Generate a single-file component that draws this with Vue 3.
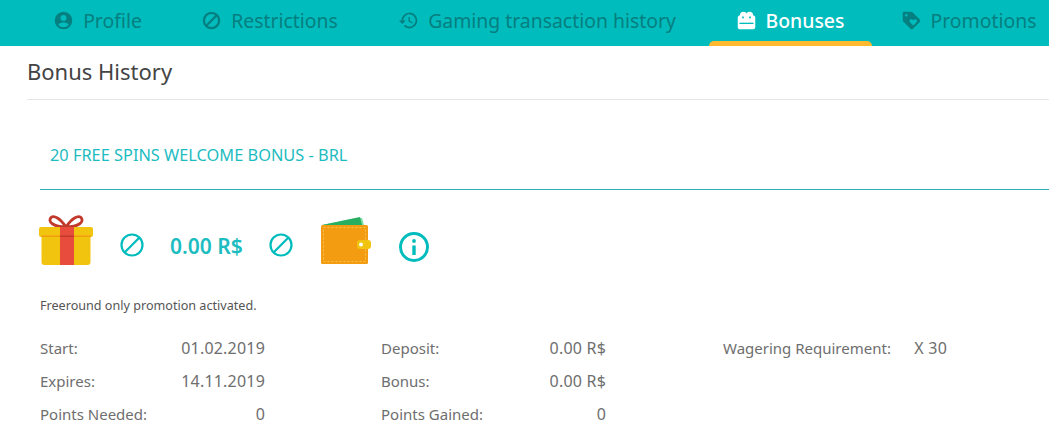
<script setup>
const tabs = [
  { label: 'Profile', icon: 'profile', width: 153 },
  { label: 'Restrictions', icon: 'ban', width: 191 },
  { label: 'Gaming transaction history', icon: 'history', width: 344 },
  { label: 'Bonuses', icon: 'bonus', width: 162, active: true },
  { label: 'Promotions', icon: 'tag', width: 195 }
]
const rows = [
  [['Start:', '01.02.2019'], ['Deposit:', '0.00 R$'], ['Wagering Requirement:', 'X 30']],
  [['Expires:', '14.11.2019'], ['Bonus:', '0.00 R$']],
  [['Points Needed:', '0'], ['Points Gained:', '0']]
]
</script>

<template>
  <div class="page">
    <nav class="tabs">
      <a v-for="t in tabs" :key="t.label" class="tab" :class="{ active: t.active }" :style="{ width: t.width + 'px' }">
        <svg v-if="t.icon === 'profile'" class="ico" viewBox="0 0 24 24"><path fill="currentColor" d="M12 2a10 10 0 1 0 0 20 10 10 0 0 0 0-20zm0 3.600a3.400 3.400 0 1 1 0 6.800 3.400 3.400 0 0 1 0-6.800zm0 14.200a7.600 7.600 0 0 1-6-3c.5-1.900 4-2.900 6-2.900s5.500 1 6 2.900a7.600 7.600 0 0 1-6 3z"/></svg>
        <svg v-else-if="t.icon === 'ban'" class="ico" viewBox="0 0 24 24"><circle cx="12" cy="12" r="8.700" fill="none" stroke="currentColor" stroke-width="2.600"/><path d="M5.500 18.500 18.500 5.500" stroke="currentColor" stroke-width="2.600"/></svg>
        <svg v-else-if="t.icon === 'history'" class="ico" viewBox="0 0 24 24"><path fill="currentColor" d="M13 3a9 9 0 0 0-9 9H1l3.900 3.900L9 12H6a7 7 0 1 1 2.050 4.950L6.640 18.360A9 9 0 1 0 13 3zm-1 5v5l4.280 2.540.72-1.210-3.500-2.080V8z"/></svg>
        <svg v-else-if="t.icon === 'bonus'" class="ico" viewBox="0 0 24 24">
          <circle cx="8.500" cy="6" r="4" fill="currentColor"/>
          <circle cx="15.500" cy="6" r="4" fill="currentColor"/>
          <rect x="2" y="6" width="20" height="16" rx="3" fill="currentColor"/>
          <rect x="7" y="7.500" width="2" height="2" fill="#00bcbd"/>
          <rect x="15" y="7.500" width="2" height="2" fill="#00bcbd"/>
          <rect x="4" y="14.500" width="16" height="1.500" fill="#00bcbd"/>
        </svg>
        <svg v-else class="ico" viewBox="0 0 24 24"><path fill="currentColor" fill-rule="evenodd" d="M2 3.500A1.500 1.500 0 0 1 3.500 2h8.200c.5 0 1 .2 1.400.6l8.300 8.300a2 2 0 0 1 0 2.800l-7.700 7.700a2 2 0 0 1-2.800 0l-8.300-8.300A2 2 0 0 1 2 11.700zM6 4.500a1.500 1.500 0 1 0 0 3 1.500 1.500 0 0 0 0-3zM11.500 10.500c-1.500 0-2.500 2-1.200 3.400l3.700 3.700 3.700-3.700c1.300-1.400.3-3.400-1.200-3.400-1 0-1.600.5-2.500 1.300-.9-.8-1.500-1.300-2.500-1.300z"/></svg>
        <span>{{ t.label }}</span>
      </a>
    </nav>

    <h1 class="heading">Bonus History</h1>

    <section class="bonus">
      <h2 class="title">20 FREE SPINS WELCOME BONUS - BRL</h2>

      <div class="summary">
        <svg class="gift" viewBox="0 0 54 50">
          <path d="M27 12C21 3 15 0 12 2.500c-3.500 4 2 9.500 15 9.500zm0 0C33 3 39 0 42 2.500c3.500 4-2 9.500-15 9.500z" fill="none" stroke="#c0392b" stroke-width="2.800"/>
          <path d="M2.500 20h49v27a3 3 0 0 1-3 3h-43a3 3 0 0 1-3-3z" fill="#f1c40f"/>
          <rect x="0" y="12" width="54" height="10" rx="2" fill="#f1c40f"/>
          <rect x="2.500" y="20.500" width="49" height="1.500" fill="#f39c12"/>
          <rect x="21" y="12" width="14" height="38" fill="#e74c3c"/>
          <rect x="21" y="20.500" width="14" height="1.500" fill="#c0392b"/>
        </svg>
        <svg class="ban first" viewBox="0 0 24 24"><circle cx="12" cy="12" r="10.500" fill="none" stroke="#00bcbd" stroke-width="2.200"/><path d="M4.800 19.200 19.200 4.800" stroke="#00bcbd" stroke-width="2.200"/></svg>
        <strong class="amount">0.00 R$</strong>
        <svg class="ban second" viewBox="0 0 24 24"><circle cx="12" cy="12" r="10.500" fill="none" stroke="#00bcbd" stroke-width="2.200"/><path d="M4.800 19.200 19.200 4.800" stroke="#00bcbd" stroke-width="2.200"/></svg>
        <svg class="wallet" viewBox="0 0 50 47">
          <path d="M1 8 36 1l5 0 2 7z" fill="#7fe0a3"/>
          <path d="M1 8 39 0l2 8z" fill="#27ae60"/>
          <rect x="0" y="8" width="47" height="39" rx="1.500" fill="#f39c12"/>
          <rect x="2.500" y="10.500" width="42" height="34" fill="none" stroke="#f8c24a" stroke-width="1" stroke-dasharray="2 2"/>
          <rect x="36" y="23" width="14" height="9" rx="3" fill="#f1c40f"/>
          <circle cx="40" cy="27.500" r="2" fill="#fff"/>
        </svg>
        <svg class="info" viewBox="0 0 30 30"><circle cx="15" cy="15" r="13.500" fill="none" stroke="#00bcbd" stroke-width="3"/><rect x="13.300" y="13.500" width="3.400" height="9.500" fill="#00bcbd"/><circle cx="15" cy="9" r="1.900" fill="#00bcbd"/></svg>
      </div>

      <p class="note">Freeround only promotion activated.</p>

      <div class="grid">
        <div v-for="(row, i) in rows" :key="i" class="row">
          <div v-for="(cell, j) in row" :key="j" class="cell" :class="'col' + j">
            <span class="key">{{ cell[0] }}</span>
            <span class="val">{{ cell[1] }}</span>
          </div>
        </div>
      </div>
    </section>
  </div>
</template>

<style>
html, body { margin: 0; background: #fff; overflow: hidden; }
</style>

<style scoped>
.page { width: 1049px; height: 440px; overflow: hidden; font-family: "Noto Sans", "Open Sans", sans-serif; color: #6e6e6e; background: #fff; }
.tabs { display: flex; height: 46px; background: #00bcbd; padding-left: 21px; }
.tab { box-sizing: border-box; flex: none; height: 46px; display: flex; align-items: center; justify-content: center; gap: 9px; padding-bottom: 5px; font-size: 19.400px; color: #067f80; white-space: nowrap; position: relative; }
.tab.active { color: #fff; font-weight: 500; }
.tab.active::after { content: ""; position: absolute; left: 0; right: 0; bottom: 0; height: 5px; background: #ffb92e; border-radius: 5px 5px 0 0; }
.tab:nth-child(4)::after { left: 0; right: -1px; }
.ico { width: 21px; height: 21px; flex: none; }
.heading { margin: 0 0 0 27px; height: 54px; line-height: 50px; box-sizing: border-box; border-bottom: 1px solid #e6e6e6; font-size: 22px; font-weight: 400; color: #444; }
.bonus { padding-left: 40px; }
.title { margin: 0; height: 90px; line-height: 110px; box-sizing: border-box; border-bottom: 1px solid #2fb0b3; padding-left: 10px; font-size: 16.350px; font-weight: 400; color: #1cbcc0; }
.summary { display: flex; align-items: flex-start; box-sizing: border-box; height: 100px; padding-top: 25px; }
.gift { width: 54px; height: 50px; margin-left: -1px; flex: none; }
.ban { width: 24px; height: 24px; margin-top: 18px; flex: none; }
.ban.first { margin-left: 27px; }
.amount { margin: 15px 0 0 26px; width: 99px; line-height: 32px; font-size: 21px; font-weight: 600; color: #1cbcc0; flex: none; }
.wallet { width: 50px; height: 47px; margin: 2px 0 0 28px; flex: none; }
.info { width: 30px; height: 30px; margin: 17px 0 0 28px; flex: none; }
.note { margin: 0; height: 42px; line-height: 32px; font-size: 12.600px; color: #555; }
.row { display: flex; height: 33px; line-height: 33px; font-size: 15px; }
.val { font-size: 16px; letter-spacing: .2px; }
.cell { display: flex; justify-content: space-between; }
.col0 { width: 225px; margin-right: 116px; }
.col1 { width: 225px; margin-right: 117px; }
.col2 { width: 224px; }
</style>
